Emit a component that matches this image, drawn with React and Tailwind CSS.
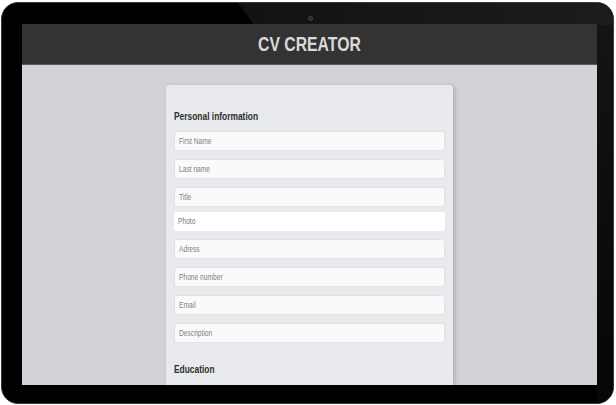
import React from 'react';

const fields = [
  { label: 'First Name' },
  { label: 'Last name' },
  { label: 'Title', tight: true },
  { label: 'Photo', file: true },
  { label: 'Adress' },
  { label: 'Phone number' },
  { label: 'Email' },
  { label: 'Description' },
];

function Field({ label, file, tight }) {
  if (file) {
    return (
      <div className="h-[19px] mb-[8px] rounded-[3px] bg-white flex items-center px-[4px]">
        <span className="inline-block origin-left scale-x-[0.7] text-[9.5px] text-[#777]">{label}</span>
      </div>
    );
  }
  return (
    <div className={tight ? 'h-[20px] mb-[5px] rounded-[3px] bg-[#fafafa] border border-[#dfe1e4] flex items-center px-[4px]' : 'h-[20px] mb-[8px] rounded-[3px] bg-[#fafafa] border border-[#dfe1e4] flex items-center px-[4px]'}>
      <span className="inline-block origin-left scale-x-[0.7] text-[9.5px] text-[#808080] whitespace-nowrap">{label}</span>
    </div>
  );
}

export default function App() {
  return (
    <div className="w-[616px] h-[405px] bg-white pt-[2px] pl-[1px] pr-[2px] pb-[1px] font-['Liberation_Sans',Arial,sans-serif]">
      <div className="relative h-full rounded-[17px] bg-black border border-[#3a3a3a] pt-[21px] pl-[20px] pr-[16px] pb-[18px] overflow-hidden">
        {/* bezel reflection */}
        <div className="absolute top-0 left-[236px] right-0 h-[22px] bg-gradient-to-r from-[#121212] to-[#1c1c1c] [clip-path:polygon(0_0,100%_0,100%_100%,16px_100%)]"></div>
        <div className="absolute top-[22px] right-0 bottom-0 w-[16px] bg-gradient-to-b from-[#141414] to-[#060606]"></div>
        {/* camera */}
        <div className="absolute top-[13px] left-[306px] w-[5px] h-[5px] rounded-full bg-[#2b2b3a] border border-[#444]"></div>

        <div className="relative h-full flex flex-col bg-[#d2d3d7] overflow-hidden">
          <div className="h-[41px] shrink-0 bg-[#333333] border-b border-[#5a5a5a] flex items-center justify-center">
            <span className="inline-block scale-x-[0.75] text-[21px] font-bold text-[#dadada]">CV CREATOR</span>
          </div>
          <div className="flex-1 flex justify-center pt-[20px]">
            <div className="w-[287px] h-full bg-[#e8eaed] rounded-t-[4px] shadow-[2px_1px_4px_rgba(0,0,0,0.18)] px-[8px] pt-[26px]">
              <div className="h-[12px] mb-[8px] flex items-center">
                <span className="inline-block origin-left scale-x-[0.8] text-[10.5px] font-bold text-[#2e2e2e] whitespace-nowrap">Personal information</span>
              </div>
              {fields.map(f => (
                <Field key={f.label} {...f} />
              ))}
              <div className="h-[12px] mt-[21px] flex items-center">
                <span className="inline-block origin-left scale-x-[0.8] text-[10.5px] font-bold text-[#2e2e2e]">Education</span>
              </div>
            </div>
          </div>
        </div>
      </div>
    </div>
  );
}
